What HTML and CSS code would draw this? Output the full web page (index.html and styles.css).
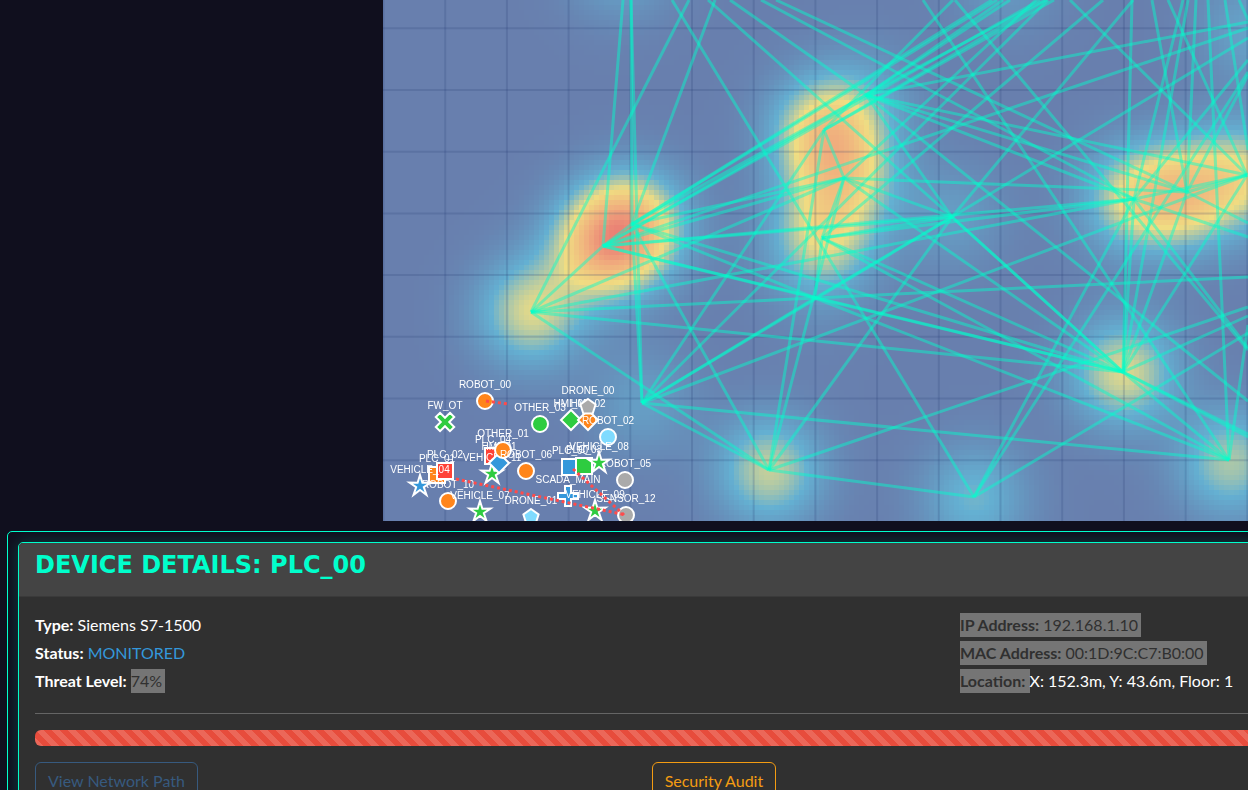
FILE: index.html
```html
<!DOCTYPE html>
<html lang="en">
<head>
<meta charset="utf-8">
<title>Device Details</title>
<link rel="stylesheet" href="styles.css">
</head>
<body>
<main class="page">
  <section class="map-row">
    <div class="map-gutter"></div>
    <div class="map">
      <canvas class="heat" id="heat"></canvas>
      <svg class="overlay" id="overlay" role="img" aria-label="Network map"></svg>
    </div>
  </section>
  <section class="panel">
    <article class="card">
      <header class="card-header"><h4 class="card-title">DEVICE DETAILS: PLC_00</h4></header>
      <div class="card-body">
        <div class="details">
          <div class="details-col">
            <p class="field"><b>Type:</b> Siemens S7-1500</p>
            <p class="field"><b>Status:</b> <span class="status">MONITORED</span></p>
            <p class="field"><b>Threat Level:</b> <mark class="picked picked-end">74%</mark></p>
          </div>
          <div class="details-col">
            <p class="field"><mark class="picked picked-end"><b>IP Address:</b> 192.168.1.10</mark></p>
            <p class="field"><mark class="picked picked-end"><b>MAC Address:</b> 00:1D:9C:C7:B0:00</mark></p>
            <p class="field"><mark class="picked"><b>Location:</b> </mark>X: 152.3m, Y: 43.6m, Floor: 1</p>
          </div>
        </div>
        <hr class="rule">
        <div class="progress"></div>
        <div class="actions">
          <div><button class="btn btn-primary" type="button" disabled>View Network Path</button></div>
          <div><button class="btn btn-warning" type="button">Security Audit</button></div>
        </div>
      </div>
    </article>
  </section>
</main>
<script src="map.js"></script>
</body>
</html>
```
FILE: styles.css
```css
* { box-sizing: border-box; }
html { overflow: hidden; background: #100f1e; }
body {
  margin: 0;
  font-family: Lato, "Liberation Sans", sans-serif;
  font-size: 16px;
  line-height: 24px;
  color: #fff;
}
.page { width: 152%; padding: 0 8px 16px 7px; }

.map-row { display: flex; }
.map-gutter { flex: 0 0 20%; }
.map { position: relative; flex: 1; height: 521px; overflow: hidden; background: #687fae; }
.heat { position: absolute; top: 0; left: 1px; image-rendering: pixelated; }
.overlay { position: absolute; top: 0; left: 0; width: 100%; height: 100%; }
.grid-line { stroke: #22386f; stroke-opacity: .18; stroke-width: 2; }
.link { stroke: #00ffcc; stroke-opacity: .45; stroke-width: 3; }
.attack { stroke: #ff4b4b; stroke-width: 3; stroke-dasharray: 3 3; }
.marker { stroke: #fff; stroke-width: 2; }
.label { font: 10px "Liberation Sans", Arial, sans-serif; fill: #fff; text-anchor: middle; }

.panel { margin-top: 10px; padding: 10px; border: 1px solid #00ffcc; border-radius: 5px; overflow: hidden; }
.card {
  border: 1px solid #00ffcc;
  border-radius: 5px;
  background: #303030;
  box-shadow: 0 0 15px rgba(0, 255, 204, .2);
  overflow: hidden;
}
.card-header { padding: 8px 16px; background: #444; border-bottom: 1px solid #3a3a3a; }
.card-title {
  margin: 0 0 8px;
  font-family: "Arial Black", "DejaVu Sans", sans-serif;
  font-weight: 900;
  font-size: 24px;
  line-height: 29px;
  color: #00ffcc;
}
.card-body { padding: 16px; }
.details { display: grid; grid-template-columns: 1fr 1fr; gap: 24px; }
.details-col { display: flex; flex-direction: column; gap: 4px; }
.field { margin: 0; }
.status { color: #3498db; }
.picked { display: inline-block; background: #757575; color: #303030; white-space: pre; }
.picked-end { padding-right: 3px; }
.rule { margin: 20px 0 16px; border: 0; border-top: 1px solid #656565; }
.progress {
  height: 16px;
  border-radius: 6px;
  background-color: #e74c3c;
  background-image: linear-gradient(45deg, rgba(255,255,255,.15) 25%, transparent 25%, transparent 50%, rgba(255,255,255,.15) 50%, rgba(255,255,255,.15) 75%, transparent 75%);
  background-size: 16px 16px;
}
.actions { display: grid; grid-template-columns: repeat(3, 1fr); gap: 24px; margin-top: 16px; }
.btn {
  padding: 6px 12px;
  border: 1px solid;
  border-radius: 6px;
  background: transparent;
  font: inherit;
}
.btn-primary { color: #375a7f; border-color: #375a7f; }
.btn-warning { color: #f39c12; border-color: #f39c12; }
```
FILE: map.js
```js
// Map space starts at this x on the floor plan.
const ORIGIN = 383;
const CELL = 5;

// Heat sources: x, y, strength.
const heat = [
  [531,312,.4],[603,246,.52],[632,224,.5],[642,403,.14],[866,95,.11],
  [825,130,.48],[844,178,.36],[822,238,.38],[952,217,.13],[815,298,.04],
  [1123,372,.41],[1134,199,.38],[1187,192,.44],[1247,175,.36],[1230,462,.33],
  [974,497,.24],[769,470,.37],[620,-35,.18],[1005,-20,.12],[1250,30,.16]
];
const stops = [
  [0,104,127,174],[.22,100,176,210],[.44,240,221,130],[.72,240,170,125],[1,230,105,112]
];
function ramp(v) {
  v = Math.min(1, v);
  for (let i = 1; i < stops.length; i++) {
    if (v <= stops[i][0]) {
      const a = stops[i-1], b = stops[i], t = (v - a[0]) / (b[0] - a[0]);
      return [1,2,3].map(k => Math.round(a[k] + (b[k] - a[k]) * t));
    }
  }
}
const canvas = document.getElementById('heat');
const cols = 310, rows = 105;
canvas.width = cols;
canvas.height = rows;
canvas.style.width = cols * CELL + 'px';
canvas.style.height = rows * CELL + 'px';
const ctx = canvas.getContext('2d');
for (let r = 0; r < rows; r++) {
  for (let c = 0; c < cols; c++) {
    const x = ORIGIN + 1 + c * CELL + 2, y = r * CELL + 2;
    let v = 0;
    for (const [hx, hy, a] of heat) {
      v += a * Math.exp(-((x-hx)**2 + (y-hy)**2) / (2 * 37 * 37));
    }
    ctx.fillStyle = 'rgb(' + ramp(v).join() + ')';
    ctx.fillRect(c, r, 1, 1);
  }
}

const NS = 'http://www.w3.org/2000/svg';
const svg = document.getElementById('overlay');
function add(parent, tag, attrs, text) {
  const el = document.createElementNS(NS, tag);
  for (const k in attrs) el.setAttribute(k, attrs[k]);
  if (text) el.textContent = text;
  parent.appendChild(el);
  return el;
}
const root = add(svg, 'g', { transform: 'translate(' + -ORIGIN + ' 0)' });
function line(cls, x1, y1, x2, y2) { add(root, 'line', { class: cls, x1, y1, x2, y2 }); }

for (let i = 0; i < 25; i++) { const x = 383.5 + i * 61.7; line('grid-line', x, 0, x, 521); }
for (let i = 0; i < 8; i++) { const y = 28.3 + i * 61.7; line('grid-line', 383, y, 1900, y); }

const n = {
  A:[531,312],B:[603,246],C:[632,224],D:[642,403],E:[866,95],F:[824,130],G:[844,178],
  H:[822,238],I:[952,217],J:[815,298],K:[1123,372],L:[1134,199],M:[1187,192],
  N:[1247,175],O:[1229,460],P:[974,497],Q:[769,470]
};
// Links between nodes, or from a node to a point beyond the visible area.
const links = [
  ['B',[623,0]],['C',[631,0]],['D',[631,0]],['C','D'],['A',[689,0]],['C',[715,0]],
  ['P',[672,0]],['I',[708,0]],['E',[730,0]],['L',[761,0]],['M',[776,0]],
  ['C',[992,0]],['C',[997,0]],['B','E'],['B',[1040,0]],['C','E'],
  ['A','B'],['B','C'],['A','G'],['A','L'],['A','J'],['A','K'],['A','Q'],
  ['D','Q'],['D','F'],['D',[1048,0]],['D','J'],['D','I'],['D','N'],['D','O'],
  ['C','Q'],['B',[1248,28]],['C','G'],['B','G'],['C','J'],['C','K'],['B','K'],['B','J'],
  ['J',[1248,277]],['J','K'],['J','O'],['J','H'],['J','I'],
  ['Q','I'],['I',[1133,0]],['Q',[1248,307]],['Q','P'],['Q','F'],['Q','G'],
  ['G','H'],['F','G'],['H','K'],['H','O'],['B','I'],['B','L'],['H','I'],['H','L'],
  ['E',[1003,0]],['E',[1010,0]],['E',[1045,0]],['F',[1047,0]],['F',[1054,0]],['F',[953,0]],
  ['G',[1036,0]],['H',[1103,0]],['E',[1248,22]],['E','N'],['E','M'],['E','L'],
  ['E','I'],['E',[1248,401]],['G','M'],['G','I'],['G','K'],['I','K'],['I','K'],
  [[923,0],'O'],[[955,0],[1248,350]],[[1070,0],'N'],[[1132,0],'K'],[[1152,0],'M'],
  [[1183,0],'L'],[[1196,0],'M'],[[1208,0],'O'],[[1168,0],'N'],[[1225,0],[1248,150]],
  [[1239,0],[1248,20]],['I',[1248,38]],['L',[1248,60]],['M',[1248,75]],
  ['K','L'],['K',[1188,0]],['K','M'],['K','N'],['P','L'],['P',[1248,72]],['P',[1248,333]],
  ['K',[1248,316]],['K','O'],['K',[1248,434]],['K',[1248,437]],['L',[1248,348]],
  ['L',[1248,237]],['M',[1248,223]],['M','N'],['L','N'],['O',[1248,325]]
];
for (const [a, b] of links) line('link', ...(n[a] || a), ...(n[b] || b));

function polar(cx, cy, radii, count) {
  const pts = [];
  for (let i = 0; i < count; i++) {
    const t = -Math.PI / 2 + i * 2 * Math.PI / count, r = radii[i % radii.length];
    pts.push((cx + r * Math.cos(t)).toFixed(1) + ',' + (cy + r * Math.sin(t)).toFixed(1));
  }
  return pts.join(' ');
}
const plus = [[-3,-10],[3,-10],[3,-3],[10,-3],[10,3],[3,3],[3,10],[-3,10],[-3,3],[-10,3],[-10,-3],[-3,-3]];
function marker(shape, x, y, fill) {
  const base = { class: 'marker', fill };
  if (shape === 'circle') add(root, 'circle', { ...base, cx: x, cy: y, r: 8 });
  else if (shape === 'square') add(root, 'rect', { ...base, x: x - 8, y: y - 8, width: 16, height: 16 });
  else {
    let points;
    if (shape === 'diamond') points = polar(x, y, [10], 4);
    if (shape === 'pentagon') points = polar(x, y, [8], 5);
    if (shape === 'star') points = polar(x, y, [11, 4], 10);
    if (shape === 'plus' || shape === 'cross') points = plus.map(p => (x + p[0]) + ',' + (y + p[1])).join(' ');
    const el = add(root, 'polygon', { ...base, points });
    if (shape === 'cross') el.setAttribute('transform', 'rotate(45 ' + x + ' ' + y + ')');
  }
}
const orange = '#ff851b', green = '#2ecc40', blue = '#3498db', red = '#ff4136', grey = '#aaaaaa', sky = '#7fdbff';
const devices = [
  ['PLC_01','square',437,475,orange],['PLC_04','square',493,456,red],['PLC_02','square',445,471,red],
  ['PLC_00','square',570,467,blue],['PLC_03','square',584,466,green],
  ['VEHICLE_11','star',492,474,green],
  ['HMI_00','diamond',571,420,green],['HMI_02','diamond',588,420,orange],['HMI_01','diamond',499,463,blue],
  ['OTHER_03','circle',540,424,green],['OTHER_01','circle',503,450,orange],
  ['ROBOT_00','circle',485,401,orange],['ROBOT_02','circle',608,437,sky],
  ['ROBOT_06','circle',526,471,orange],['ROBOT_05','circle',625,480,grey],['ROBOT_10','circle',448,501,orange],
  ['VEHICLE_04','star',420,486,blue],['VEHICLE_07','star',480,512,green],['VEHICLE_08','star',599,463,green],
  ['DRONE_00','pentagon',588,407,grey],['DRONE_01','pentagon',531,517,sky],
  ['SCADA_MAIN','plus',568,496,blue],['VEHICLE_09','star',595,511,green],
  ['SENSOR_12','circle',626,515,grey],['FW_OT','cross',445,422,green]
];
for (const [name, shape, x, y, fill] of devices) {
  marker(shape, x, y, fill);
  add(root, 'text', { class: 'label', x, y: y - 13 }, name);
}
line('attack', 486, 401, 508, 404);
line('attack', 456, 479, 626, 515);
line('attack', 573, 469, 624, 515);
```
